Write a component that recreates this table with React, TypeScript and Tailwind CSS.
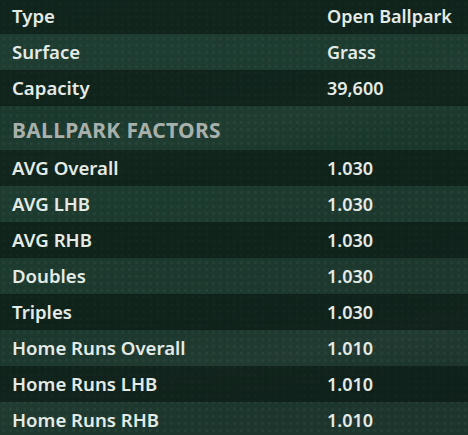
const top = [
  { label: 'Type', value: 'Open Ballpark' },
  { label: 'Surface', value: 'Grass' },
  { label: 'Capacity', value: '39,600' },
];

const factors = [
  { label: 'AVG Overall', value: '1.030' },
  { label: 'AVG LHB', value: '1.030' },
  { label: 'AVG RHB', value: '1.030' },
  { label: 'Doubles', value: '1.030' },
  { label: 'Triples', value: '1.030' },
  { label: 'Home Runs Overall', value: '1.010' },
  { label: 'Home Runs LHB', value: '1.010' },
  { label: 'Home Runs RHB', value: '1.010' },
];

function Row({ label, value, dark }: { label: string; value: string; dark: boolean }) {
  return (
    <div
      className={`grid h-9 grid-cols-[315px_1fr] items-center pl-3 ${
        dark ? 'bg-[#07140e]/55' : 'bg-white/[0.015]'
      }`}
    >
      <span className="text-[18.6px]">{label}</span>
      <span>{value}</span>
    </div>
  );
}

export default function App() {
  return (
    <div className="relative h-[435px] w-[468px] overflow-hidden bg-[linear-gradient(160deg,#1c3a2f_0%,#1a372c_45%,#1a3129_100%)] font-['Noto_Sans',sans-serif] text-[18px] font-semibold text-[#e4ebe7]">
      {/* dot texture */}
      <div className="pointer-events-none absolute inset-0 bg-[radial-gradient(circle,rgba(120,180,150,0.07)_1.3px,transparent_1.6px)] bg-[length:7px_7px]" />
      {/* light streaks */}
      <div className="pointer-events-none absolute inset-0 bg-[linear-gradient(170deg,transparent_25%,rgba(255,255,255,0.025)_32%,transparent_40%,transparent_70%,rgba(255,255,255,0.02)_78%,transparent_86%)]" />

      <div className="relative -mt-[2px]">
        {top.map((r, i) => (
          <Row key={r.label} {...r} dark={i % 2 === 0} />
        ))}

        <div className="flex h-11 items-center pl-3 pt-1.5 text-[21px] font-bold tracking-[0.3px] text-[#a8b0ac]">
          BALLPARK FACTORS
        </div>

        {factors.map((r, i) => (
          <Row key={r.label} {...r} dark={i % 2 === 0} />
        ))}
      </div>
    </div>
  );
}
